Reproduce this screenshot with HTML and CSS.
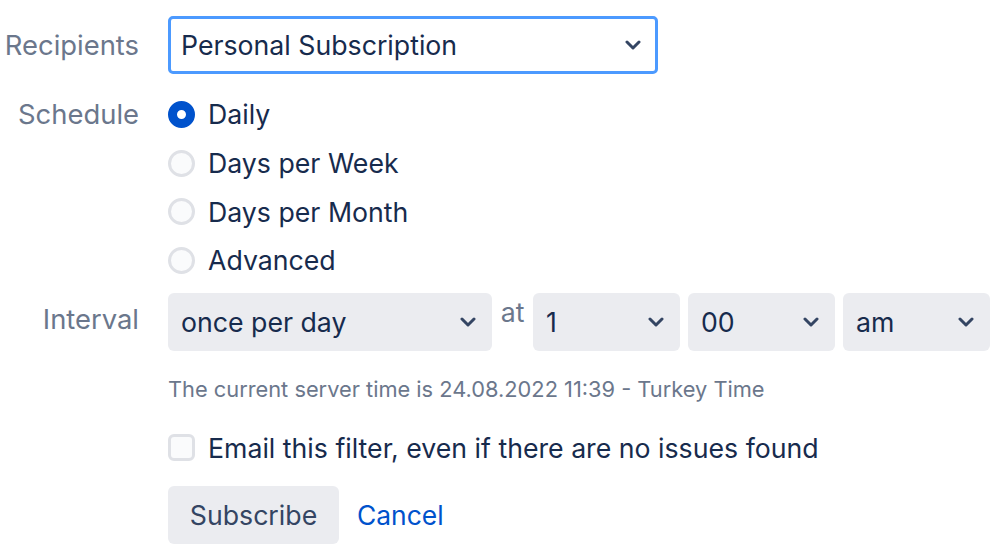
FILE: index.html
```html
<!DOCTYPE html>
<html>
<head>
<meta charset="utf-8">
<link rel="stylesheet" href="styles.css">
</head>
<body>
<form class="form">
  <div class="row row-recipients">
    <div class="label">Recipients</div>
    <div class="select select-focus select-recipients">
      <span>Personal Subscription</span>
      <svg class="chev" width="16" height="10" viewBox="0 0 16 10"><path d="M2 2 L8 8 L14 2" fill="none" stroke="#344563" stroke-width="3" stroke-linecap="round" stroke-linejoin="round"/></svg>
    </div>
  </div>

  <div class="row row-schedule">
    <div class="label label-top">Schedule</div>
    <div class="radios">
      <div class="radio-item"><span class="radio checked"></span><span>Daily</span></div>
      <div class="radio-item"><span class="radio"></span><span>Days per Week</span></div>
      <div class="radio-item"><span class="radio"></span><span>Days per Month</span></div>
      <div class="radio-item"><span class="radio"></span><span>Advanced</span></div>
    </div>
  </div>

  <div class="row row-interval">
    <div class="label label-interval">Interval</div>
    <div class="interval">
      <div class="select select-once"><span>once per day</span>
        <svg class="chev" width="16" height="10" viewBox="0 0 16 10"><path d="M2 2 L8 8 L14 2" fill="none" stroke="#344563" stroke-width="3" stroke-linecap="round" stroke-linejoin="round"/></svg>
      </div>
      <span class="at">at</span>
      <div class="select select-small"><span>1</span>
        <svg class="chev" width="16" height="10" viewBox="0 0 16 10"><path d="M2 2 L8 8 L14 2" fill="none" stroke="#344563" stroke-width="3" stroke-linecap="round" stroke-linejoin="round"/></svg>
      </div>
      <div class="select select-small"><span>00</span>
        <svg class="chev" width="16" height="10" viewBox="0 0 16 10"><path d="M2 2 L8 8 L14 2" fill="none" stroke="#344563" stroke-width="3" stroke-linecap="round" stroke-linejoin="round"/></svg>
      </div>
      <div class="select select-small"><span>am</span>
        <svg class="chev" width="16" height="10" viewBox="0 0 16 10"><path d="M2 2 L8 8 L14 2" fill="none" stroke="#344563" stroke-width="3" stroke-linecap="round" stroke-linejoin="round"/></svg>
      </div>
    </div>
  </div>

  <div class="row row-help">
    <div class="label"></div>
    <div class="help">The current server time is 24.08.2022 11:39 - Turkey Time</div>
  </div>

  <div class="row row-check">
    <div class="label"></div>
    <div class="check-item"><span class="checkbox"></span><span>Email this filter, even if there are no issues found</span></div>
  </div>

  <div class="row row-buttons">
    <div class="label"></div>
    <div class="buttons">
      <button type="button" class="btn">Subscribe</button>
      <a class="link" href="#">Cancel</a>
    </div>
  </div>
</form>
</body>
</html>
```

FILE: styles.css
```css
html, body {
  margin: 0;
  padding: 0;
  background: #ffffff;
}

body {
  font-family: Inter, "Noto Sans", "Liberation Sans", sans-serif;
  font-size: 26.7px;
  color: #172b4d;
}

.form {
  display: flex;
  flex-direction: column;
  padding-top: 16px;
}

.row {
  display: flex;
  align-items: center;
}

.label {
  width: 139px;
  flex: none;
  margin-right: 29px;
  text-align: right;
  color: #6b778c;
  font-size: 27.4px;
  white-space: nowrap;
}

.label-top {
  align-self: flex-start;
  line-height: 48px;
}

.label-interval {
  margin-top: -5px;
}

.select {
  box-sizing: border-box;
  height: 58px;
  display: flex;
  align-items: center;
  justify-content: space-between;
  padding: 0 16px 0 13px;
  background: #ebecf0;
  border-radius: 6px;
  color: #172b4d;
}

.select-focus {
  background: #ffffff;
  border: 3px solid #4c9aff;
  border-radius: 5px;
  padding: 0 14px 0 10px;
}

.select-recipients {
  width: 490px;
}

.chev {
  flex: none;
}

.row-schedule {
  margin-top: 16px;
  align-items: flex-start;
}

.radios {
  display: flex;
  flex-direction: column;
}

.radio-item {
  height: 48.7px;
  display: flex;
  align-items: center;
  gap: 13px;
}

.radio {
  box-sizing: border-box;
  width: 27px;
  height: 27px;
  border-radius: 50%;
  border: 3px solid #dfe1e6;
  background: #fafbfc;
  flex: none;
}

.radio.checked {
  border: 9px solid #0052cc;
  background: #ffffff;
}

.row-interval {
  margin-top: 8px;
}

.interval {
  display: flex;
  align-items: flex-start;
  gap: 8px;
}

.select-once {
  width: 324px;
}

.select-small {
  width: 147px;
}

.at {
  width: 25px;
  line-height: 1;
  margin-top: 6px;
  color: #6b778c;
  text-align: center;
}

.row-help {
  margin-top: 26px;
}

.help {
  font-size: 21.8px;
  line-height: 24px;
  color: #6b778c;
}

.row-check {
  margin-top: 32px;
}

.check-item {
  display: flex;
  align-items: center;
  gap: 13px;
  height: 30px;
}

.checkbox {
  box-sizing: border-box;
  width: 27px;
  height: 27px;
  border: 3px solid #dfe1e6;
  background: #fafbfc;
  border-radius: 6px;
  flex: none;
}

.row-buttons {
  margin-top: 23px;
}

.buttons {
  display: flex;
  align-items: center;
  gap: 18px;
}

.btn {
  box-sizing: border-box;
  height: 58px;
  width: 171px;
  border: none;
  border-radius: 6px;
  background: #ebecf0;
  color: #344563;
  font-family: inherit;
  font-size: 26.7px;
  padding: 0;
}

.link {
  color: #0052cc;
  text-decoration: none;
  font-size: 26.4px;
}
```
